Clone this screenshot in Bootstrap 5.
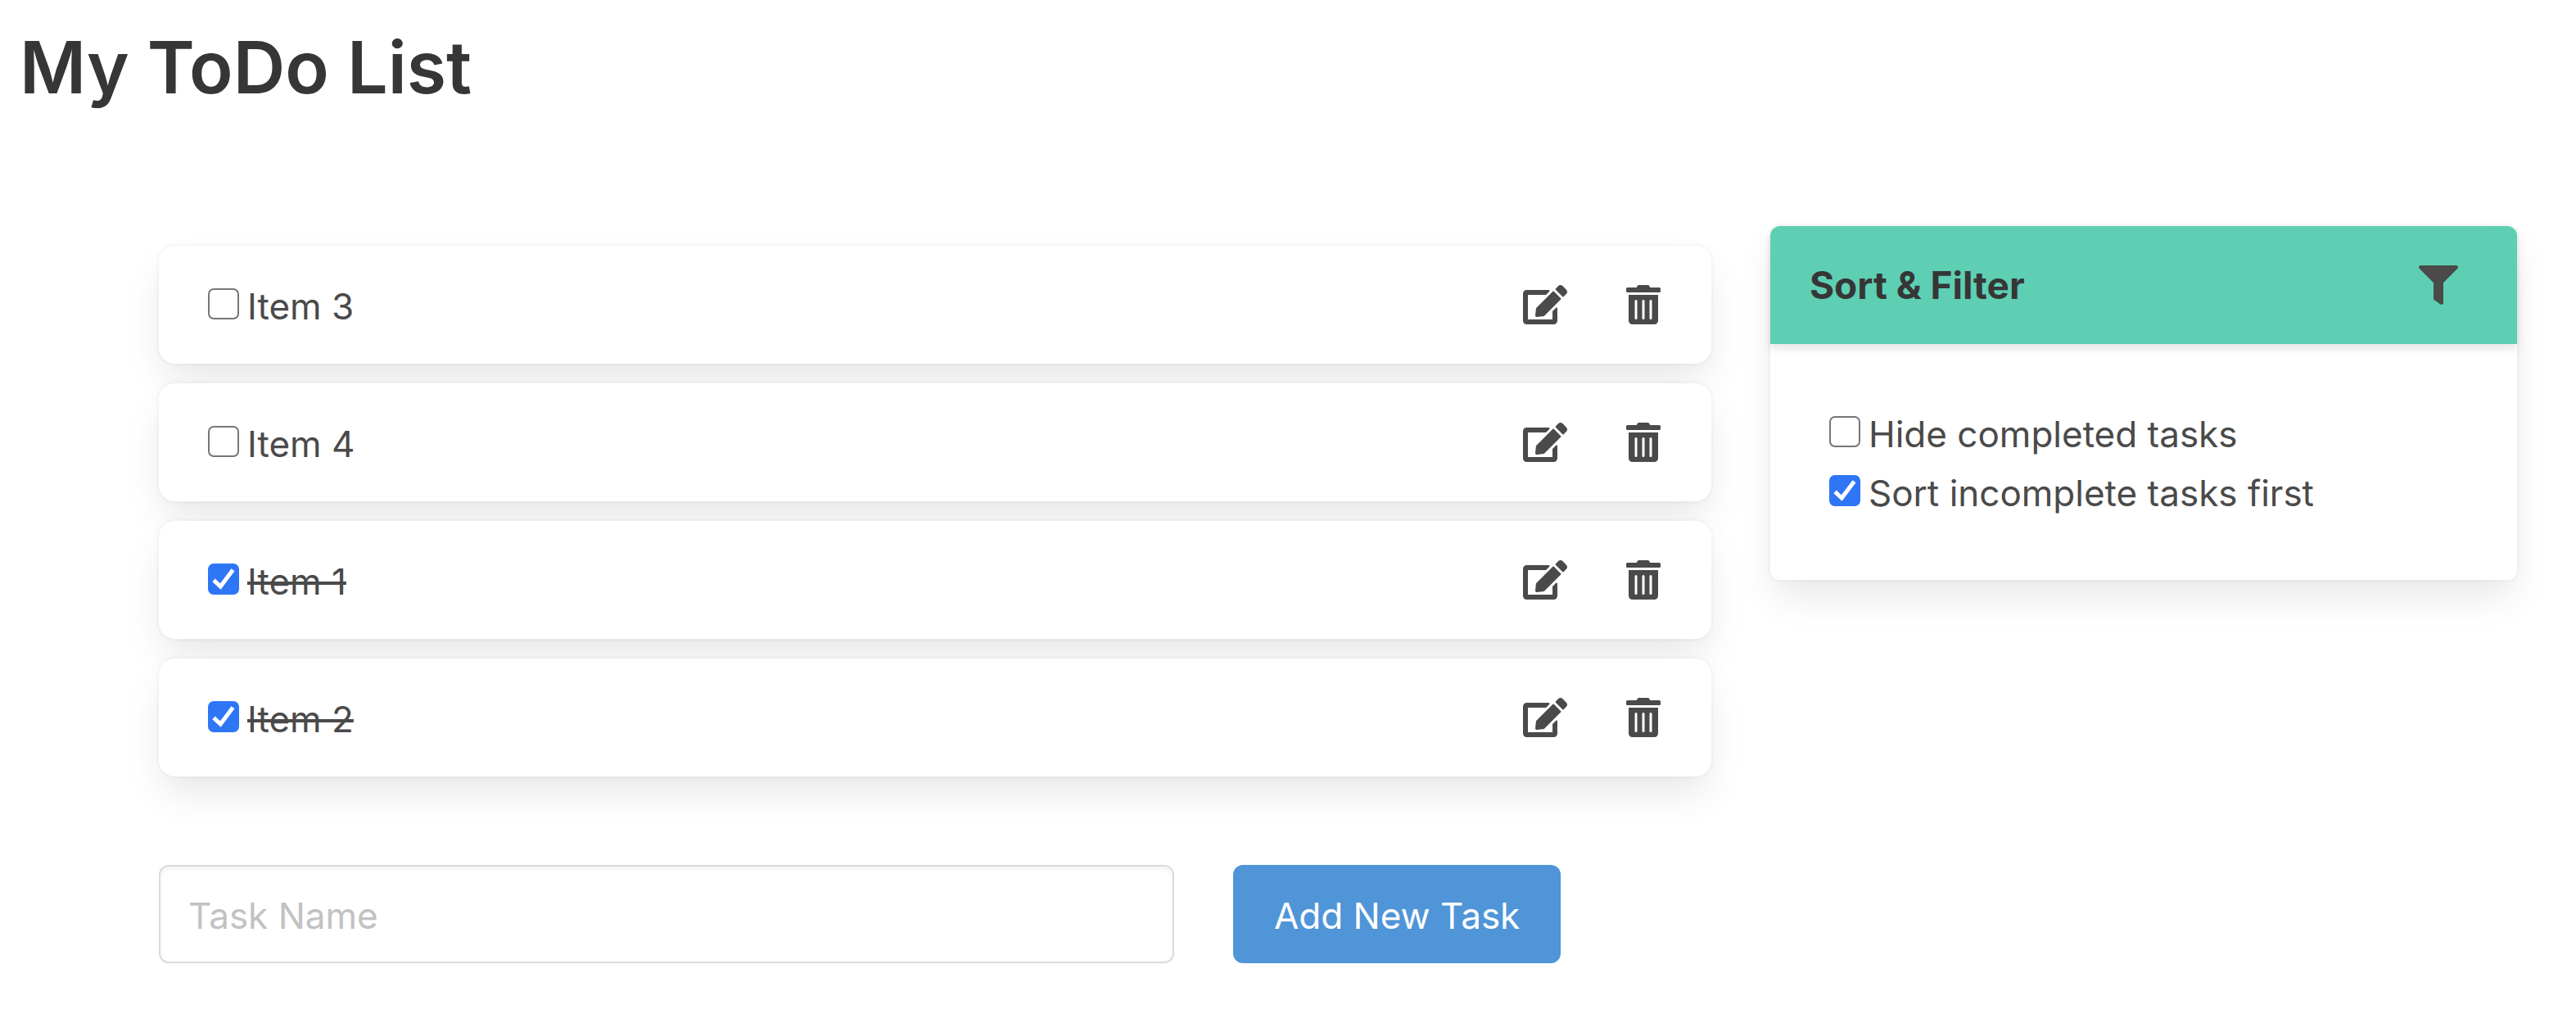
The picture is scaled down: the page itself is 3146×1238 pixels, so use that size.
<!DOCTYPE html>
<html lang="en">
<head>
<meta charset="utf-8">
<meta name="viewport" content="width=device-width, initial-scale=1">
<title>My ToDo List</title>
<link href="https://cdn.jsdelivr.net/npm/bootstrap@5.3.0/dist/css/bootstrap.min.css" rel="stylesheet">
<style>
  body { font-family: Inter, "Liberation Sans", sans-serif; font-size: 44px; line-height: 72px; color: #4a4a4a; background: #fff; }
  .page-title { font-size: 88px; line-height: 108px; font-weight: 600; color: #363636; padding: 28px 24px 0; }
  .board { padding: 140px 72px 60px 194px; }
  .board .row { --bs-gutter-x: 72px; }
  .todo-stack { gap: 24px; padding-top: 24px; }
  .raised { border: 0; background: #fff; box-shadow: 0 24px 48px -6px rgba(10,10,10,.1), 0 0 0 3px rgba(10,10,10,.02); }
  .todo-item { border-radius: 20px; padding: 36px 59px 36px 60px; }
  .todo-actions { gap: 72px; }
  .icon-btn { border: 0; background: none; padding: 0; color: inherit; width: 48px; height: 48px; display: flex; align-items: center; justify-content: center; }
  .icon-btn svg { height: 48px; flex: none; fill: currentColor; }
  .tick-row { gap: 10px; }
  .tick-row label { padding-top: 4px; line-height: 68px; }
  .tick { appearance: none; flex: none; width: 38px; height: 38px; margin: 0 0 2px; border: 2px solid #767676; border-radius: 7px; background: #fff; }
  .tick:checked { border: 0; background: #2e76f6 url("data:image/svg+xml,%3Csvg xmlns='http://www.w3.org/2000/svg' viewBox='0 0 38 38'%3E%3Cpath d='M7 20.3 15.3 28 30.5 7.8' fill='none' stroke='white' stroke-width='5'/%3E%3C/svg%3E") center/38px 38px no-repeat; }
  .tick:checked + .todo-name { text-decoration: line-through; text-decoration-thickness: 4px; }
  .filter-card { border-radius: 12px; }
  .filter-head { border: 0; background: #5ecfb3; padding: 36px 72px 36px 48px; box-shadow: 0 6px 12px rgba(10,10,10,.1); border-radius: 12px 12px 0 0 !important; }
  .filter-title { font-size: 46px; line-height: 72px; font-weight: 700; color: #363636; }
  .filter-body { padding: 72px; }
  .new-task { padding-top: 108px; }
  .task-input { height: 120px; padding: 4px 34px 0; font-size: inherit; color: #363636; border: 2px solid #dbdbdb; border-radius: 12px; box-shadow: inset 0 3px 6px rgba(10,10,10,.05); }
  .task-input::placeholder { color: #c2c2c2; opacity: 1; }
  .add-btn { height: 120px; padding: 4px 50px 0; font-size: inherit; border: 0; border-radius: 12px; background: #4f95d8; color: #fff; white-space: nowrap; }
</style>
</head>
<body>
<svg class="d-none" aria-hidden="true">
  <symbol id="i-edit" viewBox="0 0 576 512"><path d="M402.6 83.2l90.2 90.2c3.8 3.8 3.8 10 0 13.8L274.4 405.6l-92.8 10.3c-12.4 1.4-22.9-9.1-21.5-21.5l10.3-92.8L388.8 83.2c3.8-3.8 10-3.8 13.8 0zm162-22.9l-48.8-48.8c-15.2-15.2-39.9-15.2-55.2 0l-35.4 35.4c-3.8 3.8-3.8 10 0 13.8l90.2 90.2c3.8 3.8 10 3.8 13.8 0l35.4-35.4c15.2-15.3 15.2-40 0-55.2zM384 346.2V448H64V128h229.8c3.2 0 6.2-1.3 8.5-3.5l40-40c7.6-7.6 2.2-20.5-8.5-20.5H48C21.5 64 0 85.5 0 112v352c0 26.5 21.5 48 48 48h352c26.5 0 48-21.5 48-48V306.2c0-10.7-12.9-16-20.5-8.5l-40 40c-2.2 2.3-3.5 5.3-3.5 8.5z"/></symbol>
  <symbol id="i-trash" viewBox="0 0 448 512"><path d="M32 464a48 48 0 0 0 48 48h288a48 48 0 0 0 48-48V128H32zm272-256a16 16 0 0 1 32 0v224a16 16 0 0 1-32 0zm-96 0a16 16 0 0 1 32 0v224a16 16 0 0 1-32 0zm-96 0a16 16 0 0 1 32 0v224a16 16 0 0 1-32 0zM432 32H312l-9.400-18.700A24 24 0 0 0 281.100 0H166.800a23.700 23.700 0 0 0-21.400 13.300L136 32H16A16 16 0 0 0 0 48v32a16 16 0 0 0 16 16h416a16 16 0 0 0 16-16V48a16 16 0 0 0-16-16z"/></symbol>
  <symbol id="i-filter" viewBox="0 0 512 512"><path d="M487.976 0H24.028C2.710 0-8.047 25.866 7.058 40.971L192 225.941V432c0 7.831 3.821 15.170 10.237 19.662l80 55.980C298.020 518.690 320 507.493 320 487.980V225.941l184.947-184.970C520.021 25.896 509.338 0 487.976 0z"/></symbol>
</svg>

<h1 class="page-title m-0">My ToDo List</h1>

<main class="board">
  <div class="row">
    <section class="col-8">
      <ul class="todo-stack list-unstyled d-flex flex-column m-0">
        <li class="todo-item raised d-flex align-items-center justify-content-between">
          <div class="tick-row d-flex align-items-center"><input class="tick" type="checkbox" id="t3"><label class="todo-name" for="t3">Item 3</label></div>
          <div class="todo-actions d-flex"><button class="icon-btn" type="button" aria-label="Edit"><svg width="54"><use href="#i-edit"/></svg></button><button class="icon-btn" type="button" aria-label="Delete"><svg width="42"><use href="#i-trash"/></svg></button></div>
        </li>
        <li class="todo-item raised d-flex align-items-center justify-content-between">
          <div class="tick-row d-flex align-items-center"><input class="tick" type="checkbox" id="t4"><label class="todo-name" for="t4">Item 4</label></div>
          <div class="todo-actions d-flex"><button class="icon-btn" type="button" aria-label="Edit"><svg width="54"><use href="#i-edit"/></svg></button><button class="icon-btn" type="button" aria-label="Delete"><svg width="42"><use href="#i-trash"/></svg></button></div>
        </li>
        <li class="todo-item raised d-flex align-items-center justify-content-between">
          <div class="tick-row d-flex align-items-center"><input class="tick" type="checkbox" id="t1" checked><label class="todo-name" for="t1">Item 1</label></div>
          <div class="todo-actions d-flex"><button class="icon-btn" type="button" aria-label="Edit"><svg width="54"><use href="#i-edit"/></svg></button><button class="icon-btn" type="button" aria-label="Delete"><svg width="42"><use href="#i-trash"/></svg></button></div>
        </li>
        <li class="todo-item raised d-flex align-items-center justify-content-between">
          <div class="tick-row d-flex align-items-center"><input class="tick" type="checkbox" id="t2" checked><label class="todo-name" for="t2">Item 2</label></div>
          <div class="todo-actions d-flex"><button class="icon-btn" type="button" aria-label="Edit"><svg width="54"><use href="#i-edit"/></svg></button><button class="icon-btn" type="button" aria-label="Delete"><svg width="42"><use href="#i-trash"/></svg></button></div>
        </li>
      </ul>
      <form class="new-task row">
        <div class="col-8"><input class="task-input form-control" type="text" placeholder="Task Name" aria-label="Task Name"></div>
        <div class="col-4"><button class="add-btn btn" type="button">Add New Task</button></div>
      </form>
    </section>
    <aside class="col-4">
      <div class="card filter-card raised">
        <div class="card-header filter-head d-flex align-items-center justify-content-between">
          <h2 class="filter-title m-0">Sort &amp; Filter</h2>
          <button class="icon-btn" type="button" aria-label="Filter"><svg width="48"><use href="#i-filter"/></svg></button>
        </div>
        <div class="card-body filter-body">
          <div class="tick-row d-flex align-items-center"><input class="tick" type="checkbox" id="hide"><label for="hide">Hide completed tasks</label></div>
          <div class="tick-row d-flex align-items-center"><input class="tick" type="checkbox" id="sort" checked><label for="sort">Sort incomplete tasks first</label></div>
        </div>
      </div>
    </aside>
  </div>
</main>
<script src="https://cdn.jsdelivr.net/npm/bootstrap@5.3.0/dist/js/bootstrap.bundle.min.js"></script>
</body>
</html>
